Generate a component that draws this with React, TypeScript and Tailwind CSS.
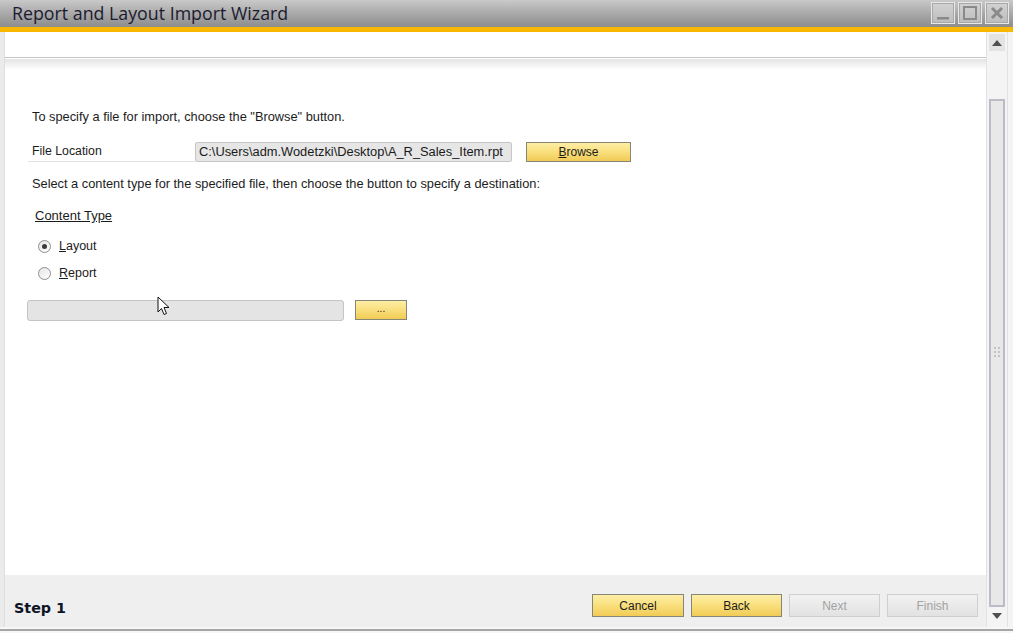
import React from "react";

function WinButton({ kind }: { kind: "min" | "max" | "close" }) {
  return (
    <div className="w-[24px] h-[22px] border border-[#e8e8e8] bg-gradient-to-b from-[#d2d2d2] to-[#bdbdbd] flex items-center justify-center shadow-[inset_0_0_0_1px_#a8a8a8]">
      <svg width="16" height="16" viewBox="0 0 16 16">
        {kind === "min" && <rect x="2" y="12" width="12" height="2.5" fill="#8a8a8a" />}
        {kind === "max" && (
          <rect x="2" y="2" width="12" height="12" fill="none" stroke="#8a8a8a" strokeWidth="2" />
        )}
        {kind === "close" && (
          <path d="M3 3 L13 13 M13 3 L3 13" stroke="#8a8a8a" strokeWidth="3" />
        )}
      </svg>
    </div>
  );
}

function YellowButton({ children, w, h = "h-[22px]" }: { children: React.ReactNode; w: string; h?: string }) {
  return (
    <div
      className={`${w} ${h} flex items-center justify-center border border-[#868676] bg-gradient-to-b from-[#fdeea6] via-[#f9df7c] to-[#f1cb55] text-[12px] text-[#1c1c1c]`}
    >
      {children}
    </div>
  );
}

function GreyButton({ children }: { children: React.ReactNode }) {
  return (
    <div className="w-[91px] h-[23px] flex items-center justify-center border border-[#cfcfcf] bg-gradient-to-b from-[#f2f2f2] to-[#e2e2e2] text-[12px] text-[#a2a2a2]">
      {children}
    </div>
  );
}

function Radio({ checked, label, first }: { checked?: boolean; label: string; first: string }) {
  return (
    <div className="flex items-center h-[16px] ml-[33px]">
      <div className="w-[13px] h-[13px] rounded-full border border-[#8e8e8e] bg-gradient-to-br from-[#e4e4e4] to-white flex items-center justify-center">
        {checked && <div className="w-[5px] h-[5px] rounded-full bg-[#3a3a3a]" />}
      </div>
      <span className="ml-[8px] text-[12.5px] text-[#1c1c1c]">
        <span className="underline">{first}</span>
        {label}
      </span>
    </div>
  );
}

export default function App() {
  return (
    <div className="w-[1013px] h-[633px] flex flex-col overflow-hidden bg-[#f3f3f3] font-['Liberation_Sans',Arial,sans-serif]">
      {/* title bar */}
      <div className="h-[27px] flex items-center bg-gradient-to-b from-[#c9c9c9] via-[#a9a9a9] to-[#8d8d8d]">
        <span className="ml-[12px] text-[17.8px] text-[#1b1b30] font-['Open_Sans',sans-serif] leading-none">
          Report and Layout Import Wizard
        </span>
        <div className="ml-auto mr-[4px] flex gap-[3px] -mt-[2px]">
          <WinButton kind="min" />
          <WinButton kind="max" />
          <WinButton kind="close" />
        </div>
      </div>
      <div className="h-[5px] bg-[#f8b700]" />

      <div className="flex flex-1 min-h-0">
        <div className="w-[5px] bg-[#ebebeb] border-r border-[#dedede]" />

        <div className="flex-1 flex flex-col bg-white">
          <div className="h-[25px] bg-white" />
          <div className="h-[1px] bg-[#c4c4c4]" />
          <div className="h-[1px] bg-white" />
          <div className="h-[11px] bg-gradient-to-b from-[#e4e4e4] to-white" />

          <div className="relative flex-1 flex flex-col text-[#1c1c1c]">
            <div className="mt-[39px] ml-[27px] h-[16px] leading-[16px] text-[12.8px]">
              To specify a file for import, choose the "Browse" button.
            </div>

            <div className="mt-[17px] flex items-center h-[20px]">
              <div className="ml-[23px] w-[167px] h-[20px] pl-[4px] flex items-center text-[12.3px] border-b border-[#e2e2e2]">
                File Location
              </div>
              <div className="w-[317px] h-[20px] flex items-center pl-[3px] rounded-[2px] border border-[#c6c6c6] bg-[#e6e6e6] text-[12.85px] text-[#1a1a1a] whitespace-nowrap overflow-hidden">
                C:\Users\adm.Wodetzki\Desktop\A_R_Sales_Item.rpt
              </div>
              <div className="ml-[14px]">
                <YellowButton w="w-[105px]" h="h-[20px]">
                  <span>
                    <span className="underline">B</span>rowse
                  </span>
                </YellowButton>
              </div>
            </div>

            <div className="mt-[14px] ml-[27px] h-[16px] leading-[16px] text-[12.8px]">
              Select a content type for the specified file, then choose the button to specify a destination:
            </div>

            <div className="mt-[16px] ml-[30px] h-[16px] leading-[16px] text-[13px] underline">
              Content Type
            </div>

            <div className="mt-[14px]">
              <Radio checked first="L" label="ayout" />
            </div>
            <div className="mt-[11px]">
              <Radio first="R" label="eport" />
            </div>

            <div className="mt-[19px] flex items-center h-[20px]">
              <div className="ml-[22px] w-[317px] h-[21px] rounded-[3px] border border-[#c4c4c4] bg-[#e4e4e4]" />
              <div className="ml-[11px]">
                <YellowButton w="w-[52px]" h="h-[20px]">
                  <span className="text-[10px] leading-none -mt-[2px]">...</span>
                </YellowButton>
              </div>
            </div>

            {/* mouse pointer */}
            <svg
              className="absolute left-[152px] top-[226px]"
              width="14"
              height="22"
              viewBox="0 0 14 22"
            >
              <path
                d="M1 1 L1 16 L4.5 12.5 L7 18.5 L9.5 17.5 L7 11.5 L12 11.5 Z"
                fill="white"
                stroke="#111"
                strokeWidth="1"
                strokeLinejoin="round"
              />
            </svg>
          </div>

          <div className="h-[52px] bg-[#efefef] flex items-end pb-[10px] pl-[9px] pr-[8px]">
            <span className="-mb-[2px] text-[14.3px] font-bold text-[#0f1424] font-['DejaVu_Sans',sans-serif]">
              Step 1
            </span>
            <div className="ml-auto flex gap-[7px]">
              <YellowButton w="w-[92px]" h="h-[23px]">Cancel</YellowButton>
              <YellowButton w="w-[91px]" h="h-[23px]">Back</YellowButton>
              <GreyButton>Next</GreyButton>
              <GreyButton>Finish</GreyButton>
            </div>
          </div>
        </div>

        {/* scrollbar */}
        <div className="w-[22px] flex flex-col border-l border-[#d6d6d6] bg-[#f4f4f4] px-[2px] pt-[2px] pb-[3px] border-r border-[#e2e2e2]">
          <div className="h-[17px] bg-[#e3e3e3] flex items-center justify-center">
            <svg width="10" height="6" viewBox="0 0 10 6">
              <path d="M0 6 L5 0 L10 6 Z" fill="#505050" />
            </svg>
          </div>
          <div className="h-[48px]" />
          <div className="flex-1 border-2 border-[#bcbcc6] bg-[#e8e8e8] flex items-end justify-center pb-[248px]">
            <div className="grid grid-cols-2 gap-[2px]">
              <div className="w-[2px] h-[2px] bg-[#c4c4c4]" />
              <div className="w-[2px] h-[2px] bg-[#c4c4c4]" />
              <div className="w-[2px] h-[2px] bg-[#c4c4c4]" />
              <div className="w-[2px] h-[2px] bg-[#c4c4c4]" />
              <div className="w-[2px] h-[2px] bg-[#c4c4c4]" />
              <div className="w-[2px] h-[2px] bg-[#c4c4c4]" />
            </div>
          </div>
          <div className="h-[17px] bg-[#f4f4f4] flex items-center justify-center">
            <svg width="10" height="6" viewBox="0 0 10 6">
              <path d="M0 0 L10 0 L5 6 Z" fill="#505050" />
            </svg>
          </div>
        </div>
        <div className="w-[5px] bg-[#f4f4f4]" />
      </div>

      <div className="h-[6px] flex flex-col bg-[#f7f7f7]">
        <div className="h-[2px]" />
        <div className="h-[2px] bg-[#a6a6a6]" />
      </div>
    </div>
  );
}
